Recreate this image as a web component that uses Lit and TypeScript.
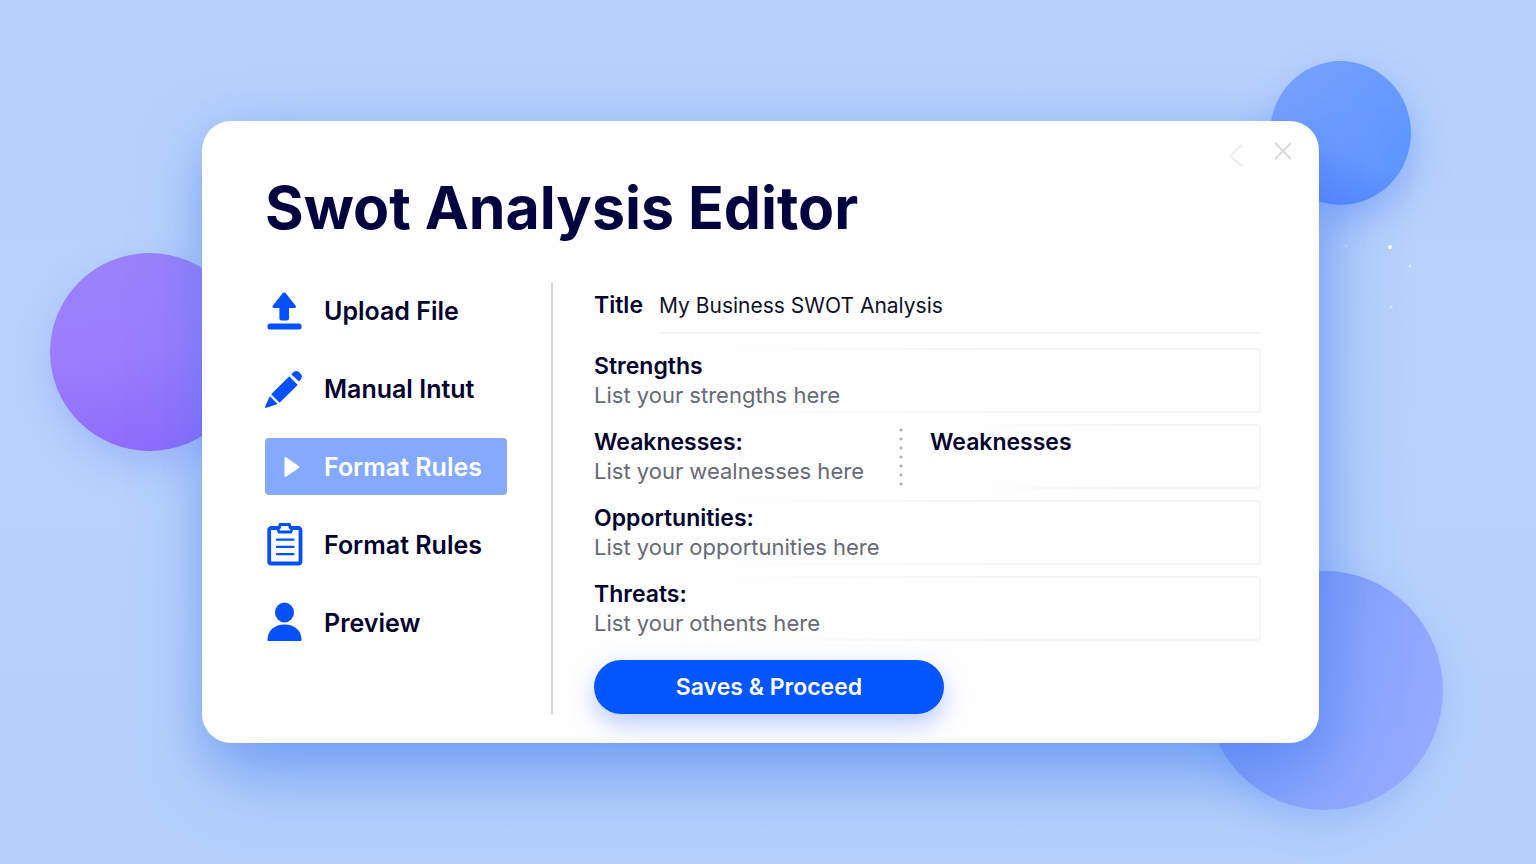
import { LitElement, html, css, svg } from "lit";
import { customElement, state } from "lit/decorators.js";
import { classMap } from "lit/directives/class-map.js";

const icons = {
  upload: svg`<path d="M20 1.500c.8 0 1.300.4 1.800 1l9.600 12.200c.9 1.200.3 2.300-1 2.300h-5.600v10.500a2 2 0 0 1-2 2h-5.600a2 2 0 0 1-2-2V17H9.600c-1.300 0-1.900-1.100-1-2.300L18.200 2.500c.5-.6 1-1 1.800-1z" transform="translate(-.8)"/><rect x="2.500" y="32.500" width="34" height="6" rx="2.500"/>`,
  pencil: svg`<path d="M6.200 25.200 24.300 7.300l8.400 8.600-18.200 17.800zM4.800 27.200l7.900 7.800L1.500 38.800c-1 .4-1.700-.3-1.400-1.300zM26.300 5.400l2.300-2.300c1.600-1.500 3.700-1.500 5.300 0l1.900 2c1.500 1.500 1.500 3.600 0 5.200l-1.700 2.200z"/>`,
  play: svg`<path d="M19.500 11.500c0-1.100 1-1.600 1.900-1l12.300 8.500c.9.600.9 1.400 0 2l-12.300 8.500c-.9.600-1.900.1-1.900-1z"/>`,
  clipboard: svg`<g fill="none" stroke="currentColor" stroke-width="3.800" stroke-linejoin="round"><path d="M12.500 3H6.200a2 2 0 0 0-2 2v31.500a2 2 0 0 0 2 2h27.300a2 2 0 0 0 2-2V5a2 2 0 0 0-2-2H27"/><path d="M15-.5h9.500l.5 3h2.200l-1.200 4.500H14l-1.500-4.500h2z" stroke-width="2.800"/><path d="M12 14.700h16.500M12 21.900h16.500M12 29.200h16.500" stroke-width="2.200" stroke-linecap="round"/></g>`,
  person: svg`<ellipse cx="19.500" cy="9.500" rx="9.500" ry="10"/><path d="M2.500 36.700C2.500 27.500 9.500 21.500 19.500 21.500s17 6 17 15.200c0 .8-.5 1.300-1.300 1.300H3.800c-.8 0-1.300-.5-1.300-1.300z"/>`,
};

interface NavEntry {
  icon: keyof typeof icons;
  label: string;
}

const entries: NavEntry[] = [
  { icon: "upload", label: "Upload File" },
  { icon: "pencil", label: "Manual Intut" },
  { icon: "play", label: "Format Rules" },
  { icon: "clipboard", label: "Format Rules" },
  { icon: "person", label: "Preview" },
];

@customElement("swot-nav")
class SwotNav extends LitElement {
  @state() private active = 2;

  static styles = css`
    :host {
      display: block;
    }
    .list {
      display: flex;
      flex-direction: column;
      gap: 21px;
    }
    .item {
      display: flex;
      align-items: center;
      gap: 19px;
      height: 57px;
      padding: 0;
      border: 0;
      border-radius: 4px;
      background: none;
      color: #03032e;
      font: 600 25px/32px Inter, sans-serif;
      text-align: left;
      cursor: pointer;
    }
    .item.active {
      background: #84a9fd;
      color: #fff;
    }
    .icon {
      flex: none;
      width: 40px;
      height: 40px;
      overflow: visible;
      fill: currentColor;
      color: #0450fb;
    }
    .active .icon {
      color: #fff;
    }
  `;

  render() {
    return html`<nav class="list">
      ${entries.map(
        (entry, i) => html`<button
          type="button"
          class=${classMap({ item: true, active: i === this.active })}
          @click=${() => (this.active = i)}
        >
          <svg class="icon" viewBox="0 0 40 40" aria-hidden="true">${icons[entry.icon]}</svg>
          ${entry.label}
        </button>`
      )}
    </nav>`;
  }
}

@customElement("swot-form")
class SwotForm extends LitElement {
  static styles = css`
    :host {
      display: block;
      font-family: Inter, sans-serif;
    }
    .form {
      display: flex;
      flex-direction: column;
      gap: 11px;
    }
    .label {
      color: #03032e;
      font-size: 23px;
      font-weight: 600;
      line-height: 29px;
    }
    .input {
      box-sizing: border-box;
      width: 100%;
      min-width: 0;
      height: 29px;
      padding: 0;
      border: 0;
      outline: 0;
      background: none;
      color: #10102a;
      font: 400 22px/29px Inter, sans-serif;
    }
    .input::placeholder {
      color: #666a76;
      opacity: 1;
    }
    .title-row {
      display: flex;
      gap: 16px;
      padding-bottom: 3px;
    }
    .title-row .label {
      padding: 9px 0;
    }
    .title-row .input {
      flex: 1;
      height: 52px;
      padding-bottom: 4px;
      border-bottom: 2px solid #f4f5f6;
      font-size: 21px;
    }
    .field {
      position: relative;
      display: flex;
      flex-direction: column;
      box-sizing: border-box;
      height: 65px;
      padding-top: 4px;
    }
    .framed::before {
      content: "";
      position: absolute;
      inset: 0;
      border: 2px solid #f4f5f6;
      border-radius: 3px;
      pointer-events: none;
      mask-image: linear-gradient(to right, transparent 20%, #000 60%);
    }
    .split {
      display: grid;
      grid-template-columns: 305px 4px 1fr;
    }
    .dots {
      margin-top: 2px;
      background: radial-gradient(circle at 2px 4px, #b2b4ba 1px, transparent 2px) 0 0 / 4px 9px;
    }
    .side {
      margin-left: 9px;
      padding-left: 18px;
    }
    .save {
      align-self: flex-start;
      width: 350px;
      height: 54px;
      margin-top: 8px;
      border: 0;
      border-radius: 27px;
      background: #0355fd;
      box-shadow: 0 10px 24px rgba(60, 110, 255, 0.35);
      color: #fff;
      font: 600 23px/30px Inter, sans-serif;
      cursor: pointer;
    }
  `;

  private field(id: string, label: string, hint: string, framed = true) {
    return html`<div class=${classMap({ field: true, framed })}>
      <label class="label" for=${id}>${label}</label>
      <input class="input" id=${id} type="text" placeholder=${hint} />
    </div>`;
  }

  render() {
    return html`<form class="form" @submit=${(e: Event) => e.preventDefault()}>
      <div class="title-row">
        <label class="label" for="title">Title</label>
        <input class="input" id="title" type="text" value="My Business SWOT Analysis" />
      </div>
      ${this.field("strengths", "Strengths", "List your strengths here")}
      <div class="split">
        ${this.field("weaknesses", "Weaknesses:", "List your wealnesses here", false)}
        <div class="dots"></div>
        <div class="field framed side">
          <label class="label" for="weaknesses-more">Weaknesses</label>
          <input class="input" id="weaknesses-more" type="text" />
        </div>
      </div>
      ${this.field("opportunities", "Opportunities:", "List your opportunities here")}
      ${this.field("threats", "Threats:", "List your othents here")}
      <button class="save" type="submit">Saves &amp; Proceed</button>
    </form>`;
  }
}

@customElement("app-root")
class AppRoot extends LitElement {
  static styles = css`
    :host {
      display: block;
      font-family: Inter, sans-serif;
    }
    .page {
      position: relative;
      box-sizing: border-box;
      min-height: 100vh;
      padding: 121px 217px 121px 202px;
      overflow: hidden;
      background: linear-gradient(#b7d1fb, #b8d3fc 50%, #b4d0fb);
    }
    .orb {
      position: absolute;
      border-radius: 50%;
    }
    .violet {
      left: 50px;
      top: 253px;
      width: 199px;
      height: 198px;
      background: linear-gradient(170deg, #9b82fb, #9a7dfd 50%, #8c68fb);
      box-shadow: 0 16px 36px rgba(110, 130, 250, 0.3);
    }
    .blue {
      right: 125px;
      top: 61px;
      width: 141px;
      height: 144px;
      background: linear-gradient(200deg, transparent 60%, rgba(70, 120, 255, 0.7)),
        linear-gradient(110deg, #7ba3fd, #6c9dff 50%, #5a94ff);
      box-shadow: 4px 16px 36px rgba(80, 130, 250, 0.4);
    }
    .indigo {
      right: 93px;
      top: 571px;
      width: 237px;
      height: 239px;
      background: linear-gradient(120deg, #7f9cf8 20%, #8ba6fe 55%, #96abff 90%);
      box-shadow: 0 12px 36px rgba(100, 145, 250, 0.3);
    }
    .sparks {
      position: absolute;
      right: 120px;
      top: 240px;
      width: 76px;
      height: 76px;
      fill: #fff;
    }
    .card {
      position: relative;
      box-sizing: border-box;
      padding: 51px 58px 29px 63px;
      border-radius: 29px;
      background: #fefefe;
      box-shadow: 8px 32px 72px rgba(70, 125, 240, 0.5), 4px 12px 40px rgba(70, 125, 240, 0.25);
    }
    .heading {
      margin: 0;
      color: #03033f;
      font-size: 59px;
      font-weight: 700;
      line-height: 72px;
    }
    .window {
      position: absolute;
      top: 17px;
      right: 24px;
      display: flex;
      gap: 24px;
    }
    .tool {
      width: 24px;
      height: 28px;
      padding: 0;
      border: 0;
      background: none;
      color: #d8d8da;
      cursor: pointer;
    }
    .tool.faint {
      color: #eeeeef;
    }
    .glyph {
      display: block;
      width: 24px;
      height: 28px;
      fill: none;
      stroke: currentColor;
      stroke-width: 1.800;
    }
    .body {
      display: flex;
      margin-top: 38px;
    }
    .side {
      flex: 0 0 242px;
      margin-right: 44px;
    }
    .main {
      flex: 1;
      padding-left: 41px;
      border-left: 2px solid #d6d8dc;
    }
  `;

  render() {
    return html`<main class="page">
      <div class="orb violet"></div>
      <div class="orb blue"></div>
      <div class="orb indigo"></div>
      <svg class="sparks" viewBox="0 0 76 76" aria-hidden="true">
        <circle cx="50" cy="7" r="2" />
        <circle cx="6" cy="6" r="1.500" opacity="0.4" />
        <circle cx="70" cy="26" r="1.500" opacity="0.5" />
        <circle cx="51" cy="67" r="1.500" opacity="0.5" />
      </svg>
      <section class="card">
        <div class="window">
          <button class="tool faint" type="button" aria-label="Back">
            <svg class="glyph" viewBox="0 0 24 28"><path d="M19 7 7 18l12 10" /></svg>
          </button>
          <button class="tool" type="button" aria-label="Close">
            <svg class="glyph" viewBox="0 0 24 28"><path d="m4 5 16 16M20 5 4 21" /></svg>
          </button>
        </div>
        <h1 class="heading">Swot Analysis Editor</h1>
        <div class="body">
          <swot-nav class="side"></swot-nav>
          <swot-form class="main"></swot-form>
        </div>
      </section>
    </main>`;
  }
}
